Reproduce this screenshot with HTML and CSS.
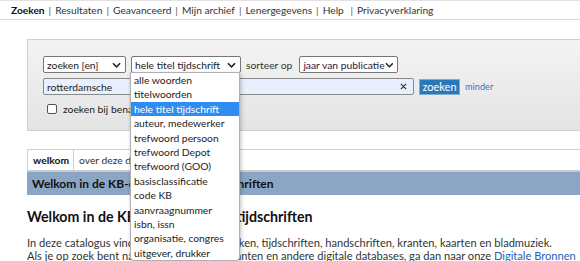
FILE: index.html
```html
<!DOCTYPE html>
<html lang="nl">
<head>
<meta charset="utf-8">
<title>KB catalogus</title>
<link rel="stylesheet" href="styles.css">
</head>
<body>
<nav class="topnav">
  <b class="cur">Zoeken</b><span class="sep">|</span><a>Resultaten</a><span class="sep">|</span><a>Geavanceerd</a><span class="sep">|</span><a>Mijn archief</a><span class="sep">|</span><a>Lenergegevens</a><span class="sep">|</span><a>Help</a>&nbsp;<span class="sep">|</span><a>Privacyverklaring</a>
</nav>

<section class="panel">
  <div class="row">
    <div class="sel s1"><span>zoeken [en]</span><svg class="chev" viewBox="0 0 10 6" width="9" height="6"><path d="M1 1l4 4 4-4" fill="none" stroke="#222" stroke-width="1.7"/></svg></div>
    <div class="sel s2"><span>hele titel tijdschrift</span><svg class="chev" viewBox="0 0 10 6" width="9" height="6"><path d="M1 1l4 4 4-4" fill="none" stroke="#222" stroke-width="1.7"/></svg></div>
    <span class="lbl">sorteer op</span>
    <div class="sel s3"><span>jaar van publicatie</span><svg class="chev" viewBox="0 0 10 6" width="9" height="6"><path d="M1 1l4 4 4-4" fill="none" stroke="#222" stroke-width="1.7"/></svg></div>
  </div>
  <div class="row">
    <div class="inp"><span>rotterdamsche</span><svg class="clr" viewBox="0 0 8 8" width="7" height="7"><path d="M1 1l6 6M7 1l-6 6" stroke="#333" stroke-width="1.3"/></svg></div>
    <span class="btn">zoeken</span>
    <a class="minder">minder</a>
  </div>
  <div class="row chk">
    <span class="box"></span><span>zoeken bij benadering</span>
  </div>

  <ul class="dropdown">
    <li>alle woorden</li>
    <li>titelwoorden</li>
    <li class="on">hele titel tijdschrift</li>
    <li>auteur, medewerker</li>
    <li>trefwoord persoon</li>
    <li>trefwoord Depot</li>
    <li>trefwoord (GOO)</li>
    <li>basisclassificatie</li>
    <li>code KB</li>
    <li>aanvraagnummer</li>
    <li>isbn, issn</li>
    <li>organisatie, congres</li>
    <li>uitgever, drukker</li>
  </ul>
</section>

<section class="content">
  <div class="tabs">
    <span class="tab active">welkom</span><span class="tab">over deze database</span>
  </div>
  <div class="bar">Welkom in de KB-catalogus voor tijdschriften</div>
  <h1>Welkom in de KB-catalogus voor tijdschriften</h1>
  <p>In deze catalogus vind je onze gedrukte boeken, tijdschriften, handschriften, kranten, kaarten en bladmuziek.<br>
  Als je op zoek bent naar artikelen, online kranten en andere digitale databases, ga dan naar onze <a>Digitale Bronnen</a></p>
</section>
</body>
</html>
```

FILE: styles.css
```css
html, body {
  margin: 0;
  padding: 0;
  background: #fff;
  overflow: hidden;
}
body {
  font-family: Lato, "Noto Sans", sans-serif;
  font-size: 10.3px;
  color: #222;
  width: 580px;
  height: 261px;
}
.topnav {
  height: 18px;
  border-top: 1px solid #e2e2e2;
  border-bottom: 1px solid #dcdcdc;
  padding-left: 11px;
  display: flex;
  align-items: center;
  white-space: nowrap;
  color: #333;
  font-size: 10.2px;
}
.topnav .cur { color: #111; }
.topnav a { color: #333; }
.topnav .sep { margin: 0 4px; color: #555; }

.panel {
  position: relative;
  margin: 19px 0 0 27px;
  height: 74px;
  padding: 16px 0 0 15px;
  border: 1px solid #cfcfcf;
  border-right: none;
  background: linear-gradient(#f3f3f3, #e4e4e4);
}
.row {
  display: flex;
  align-items: center;
  height: 17px;
  margin-bottom: 5px;
  white-space: nowrap;
}
.sel {
  box-sizing: border-box;
  height: 17px;
  border: 1px solid #767676;
  border-radius: 2px;
  background: #fff;
  display: flex;
  align-items: center;
  justify-content: space-between;
  padding: 0 4px 0 3px;
  margin-right: 5px;
  color: #222;
  overflow: hidden;
}
.s1 { width: 83px; }
.s2 { width: 110px; }
.s3 { width: 99px; color: #2a1a3a; }
.lbl { margin: 0 7px 0 0; color: #333; }
.inp {
  box-sizing: border-box;
  width: 371px;
  height: 17px;
  border: 1px solid #8a8a8a;
  border-radius: 2px;
  background: #e8f0fe;
  display: flex;
  align-items: center;
  justify-content: space-between;
  padding: 0 6px 0 3px;
  margin-right: 5px;
}
.btn {
  box-sizing: border-box;
  width: 41px;
  height: 16px;
  background: #2a78b8;
  border: 1px solid #7eaed6;
  color: #fff;
  font-size: 11px;
  display: flex;
  align-items: center;
  justify-content: center;
  margin-right: 5px;
}
.minder { color: #4a70c0; font-size: 9.2px; }
.chk { margin-top: 1px; padding-left: 4px; }
.box {
  box-sizing: border-box;
  width: 10px;
  height: 10px;
  border: 1px solid #555;
  border-radius: 2px;
  background: #fff;
  margin-right: 6px;
}

.dropdown {
  position: absolute;
  left: 102px;
  top: 32px;
  width: 108px;
  margin: 0;
  padding: 0;
  list-style: none;
  background: #fff;
  border: 1px solid #b0b0b0;
  border-radius: 0 0 4px 4px;
  box-shadow: 1px 2px 4px rgba(0,0,0,0.25);
  z-index: 5;
  font-size: 10.3px;
}
.dropdown li {
  height: 14.4px;
  line-height: 14.4px;
  padding-left: 3px;
  white-space: nowrap;
  color: #222;
}
.dropdown li.on { background: #2f8cf0; color: #fff; }

.content { margin: 18px 0 0 27px; }
.tabs {
  border-top: 1px solid #cfcfcf;
  border-bottom: 1px solid #cfcfcf;
  height: 20px;
  display: flex;
}
.tab {
  display: flex;
  align-items: center;
  padding: 0 5px;
  border-left: 1px solid #cfcfcf;
  color: #333;
  white-space: nowrap;
}
.tab.active { font-weight: bold; color: #111; padding: 0 4px 0 5px; }
.bar {
  height: 23px;
  background: #8ba6c4;
  border-top: 1px solid #c8c8c8;
  font-weight: bold;
  font-size: 12px;
  color: #111;
  display: flex;
  align-items: center;
  padding-left: 5px;
  white-space: nowrap;
}
h1 {
  font-size: 14.2px;
  margin: 13px 0 0;
  color: #111;
}
p {
  margin: 11px 0 0;
  line-height: 13px;
  font-size: 11.1px;
  color: #333;
  white-space: nowrap;
}
p a { color: #2a5db0; }
```
